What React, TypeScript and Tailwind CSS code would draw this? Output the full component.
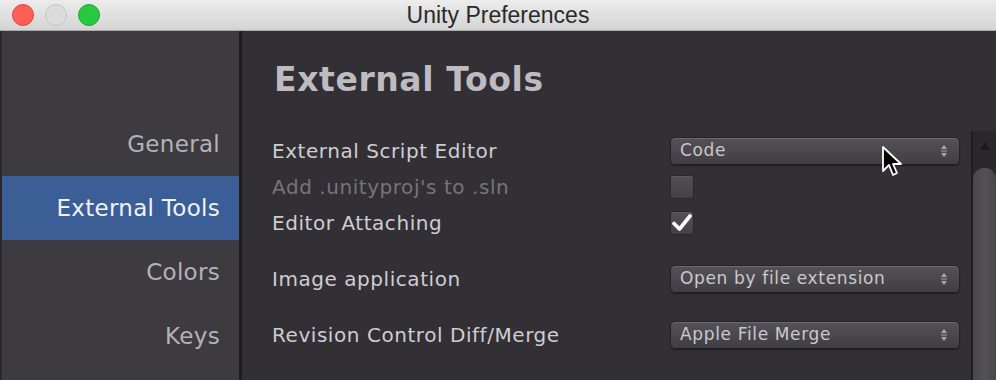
import React from 'react';

const ui = { fontFamily: '"DejaVu Sans", "Liberation Sans", sans-serif' };

function Stepper() {
  return (
    <svg width="8" height="14" viewBox="0 0 8 14" className="text-[#a9a6ab]">
      <path d="M4 1 L7 5 H1 Z" fill="currentColor" />
      <rect x="1" y="6.5" width="6" height="1" fill="currentColor" />
      <path d="M4 13 L7 9 H1 Z" fill="currentColor" />
    </svg>
  );
}

function Dropdown({ value }: { value: string }) {
  return (
    <div className="flex h-[28px] w-[290px] items-center justify-between rounded-[5px] border border-[#252327] bg-gradient-to-b from-[#555257] to-[#403d43] pl-[9px] pr-[11px] text-[17px] tracking-[0.65px] text-[#cac8cc] shadow-[inset_0_1px_0_rgba(255,255,255,0.14),0_1px_1px_rgba(0,0,0,0.4)]">
      <span>{value}</span>
      <Stepper />
    </div>
  );
}

function Checkbox({ checked }: { checked?: boolean }) {
  return (
    <div className="flex size-[24px] items-center justify-center rounded-[3px] border border-[#29272b] bg-gradient-to-b from-[#534f56] to-[#444146] shadow-[inset_0_1px_0_rgba(255,255,255,0.08)]">
      {checked && (
        <svg width="20" height="18" viewBox="0 0 20 18">
          <path d="M2 9.5 L7.5 15 L18 2" fill="none" stroke="#ffffff" strokeWidth="3.6" strokeLinecap="round" strokeLinejoin="round" />
        </svg>
      )}
    </div>
  );
}

function Row({ label, dim, children, className }: { label: string; dim?: boolean; children: React.ReactNode; className?: string }) {
  return (
    <div className={`flex items-center ${className ?? ''}`}>
      <span className={`w-[398px] text-[20px] tracking-[0.55px] ${dim ? 'text-[#77747a]' : 'text-[#cfcdd1]'}`}>{label}</span>
      {children}
    </div>
  );
}

export default function App() {
  const nav = ['General', 'External Tools', 'Colors', 'Keys'];
  return (
    <div className="relative flex h-[380px] w-[996px] flex-col overflow-hidden bg-[#322f35]" style={ui}>
      {/* title bar */}
      <div className="relative flex h-[31px] shrink-0 items-center justify-center border-b border-[#a9a9a9] bg-gradient-to-b from-[#ececec] to-[#d4d4d4]">
        <div className="absolute left-[12px] top-[4px] flex gap-[11px]">
          <span className="size-[22px] rounded-full border border-[#e0443e] bg-[#fe5f57]" />
          <span className="size-[22px] rounded-full border border-[#c4c4c4] bg-[#dcdcdc]" />
          <span className="size-[22px] rounded-full border border-[#1aab29] bg-[#28c840]" />
        </div>
        <span className="text-[23px] text-[#2a2a2a]" style={{ fontFamily: '"Liberation Sans", Roboto, sans-serif' }}>
          Unity Preferences
        </span>
      </div>

      <div className="flex flex-1">
        {/* sidebar */}
        <div className="w-[242px] shrink-0 border-l-[2px] border-r-[3px] border-l-[#2a282c] border-r-[#1e1c20] bg-[#3d3b40] pt-[81px]">
          {nav.map((n) => (
            <div
              key={n}
              className={`flex h-[64px] items-center justify-end pr-[19px] text-[23px] tracking-[0.3px] ${
                n === 'External Tools' ? 'bg-[#3c5e97] text-[#eef2f8]' : 'text-[#b4b2b6]'
              }`}
            >
              {n}
            </div>
          ))}
        </div>

        {/* main */}
        <div className="flex flex-1">
          <div className="flex-1 pl-[30px] pt-[24px]">
            <h1 className="pl-[2px] text-[33px] font-bold tracking-[0.6px] text-[#bebcc0]">External Tools</h1>
            <div className="mt-[28px] flex flex-col">
              <Row label="External Script Editor" className="h-[36px]">
                <Dropdown value="Code" />
              </Row>
              <Row label="Add .unityproj's to .sln" dim className="h-[36px]">
                <Checkbox />
              </Row>
              <Row label="Editor Attaching" className="h-[36px]">
                <Checkbox checked />
              </Row>
              <Row label="Image application" className="mt-[20px] h-[36px]">
                <Dropdown value="Open by file extension" />
              </Row>
              <Row label="Revision Control Diff/Merge" className="mt-[20px] h-[36px]">
                <Dropdown value="Apple File Merge" />
              </Row>
            </div>
          </div>

          {/* scrollbar */}
          <div className="mt-[100px] flex w-[25px] shrink-0 flex-col border-l-[2px] border-[#1f1d21] bg-[#2b282d]">
            <div className="flex h-[37px] items-start justify-center pt-[10px]">
              <svg width="12" height="10" viewBox="0 0 12 10">
                <path d="M6 1 L11 9 H1 Z" fill="#1a181b" />
              </svg>
            </div>
            <div className="flex-1 rounded-t-[11px] bg-gradient-to-r from-[#4a474c] via-[#545156] to-[#4a474c]" />
          </div>
        </div>
      </div>

      {/* mouse cursor */}
      <svg className="absolute left-[881px] top-[145px]" width="24" height="36" viewBox="0 0 24 36">
        <path d="M2 2 L2 26 L8 20 L12 30 L16 28 L12 19 L20 19 Z" fill="#000" stroke="#fff" strokeWidth="1.8" strokeLinejoin="round" />
      </svg>
    </div>
  );
}
